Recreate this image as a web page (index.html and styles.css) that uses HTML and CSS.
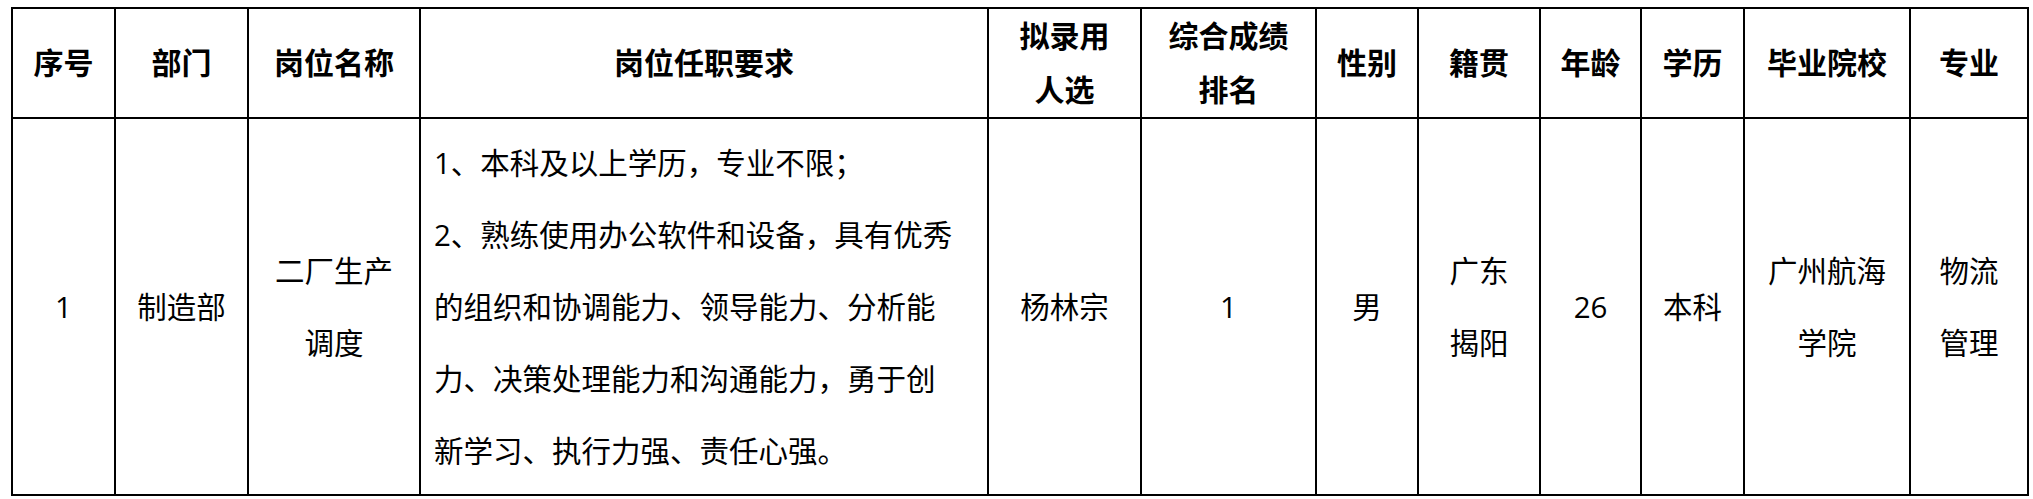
FILE: index.html
```html
<!DOCTYPE html>
<html lang="zh-CN">
<head>
<meta charset="utf-8">
<title>拟录用人选公示</title>
<link rel="stylesheet" href="styles.css">
</head>
<body>
<table class="roster">
  <colgroup>
    <col class="w-no">
    <col class="w-dept">
    <col class="w-post">
    <col class="w-req">
    <col class="w-name">
    <col class="w-rank">
    <col class="w-sex">
    <col class="w-origin">
    <col class="w-age">
    <col class="w-edu">
    <col class="w-school">
    <col class="w-major">
  </colgroup>
  <thead>
    <tr class="head-row">
      <th>序号</th>
      <th>部门</th>
      <th>岗位名称</th>
      <th>岗位任职要求</th>
      <th>拟录用<br>人选</th>
      <th>综合成绩<br>排名</th>
      <th>性别</th>
      <th>籍贯</th>
      <th>年龄</th>
      <th>学历</th>
      <th>毕业院校</th>
      <th>专业</th>
    </tr>
  </thead>
  <tbody>
    <tr class="body-row">
      <td>1</td>
      <td>制造部</td>
      <td>二厂生产<br>调度</td>
      <td class="req">
        <p>1、本科及以上学历，专业不限；</p>
        <p>2、熟练使用办公软件和设备，具有优秀的组织和协调能力、领导能力、分析能力、决策处理能力和沟通能力，勇于创新学习、执行力强、责任心强。</p>
      </td>
      <td>杨林宗</td>
      <td>1</td>
      <td>男</td>
      <td>广东<br>揭阳</td>
      <td>26</td>
      <td>本科</td>
      <td>广州航海<br>学院</td>
      <td>物流<br>管理</td>
    </tr>
  </tbody>
</table>
</body>
</html>
```

FILE: styles.css
```css
html, body {
  margin: 0;
  padding: 0;
  background: #ffffff;
}

body {
  font-family: "Open Sans", "Noto Sans CJK SC", sans-serif;
  color: #000000;
}

.roster {
  margin: 7px 0 0 11px;
  width: 2018px;
  table-layout: fixed;
  border-collapse: separate;
  border-spacing: 0;
  border-left: 2px solid #000;
  border-top: 2px solid #000;
}

.w-no { width: 103px; }
.w-dept { width: 133px; }
.w-post { width: 172px; }
.w-req { width: 568px; }
.w-name { width: 153px; }
.w-rank { width: 175px; }
.w-sex { width: 102px; }
.w-origin { width: 122px; }
.w-age { width: 101px; }
.w-edu { width: 103px; }
.w-school { width: 166px; }
.w-major { width: 118px; }

.roster th,
.roster td {
  border-right: 2px solid #000;
  border-bottom: 2px solid #000;
  padding: 0;
  text-align: center;
  vertical-align: middle;
  white-space: nowrap;
}

.roster th {
  font-size: 30px;
  font-weight: 700;
  line-height: 54px;
}

.roster td {
  font-size: 29.5px;
  font-weight: 400;
  line-height: 72px;
}

.head-row {
  height: 109px;
}

.body-row {
  height: 377px;
}

.roster td.req {
  text-align: left;
  white-space: normal;
  padding: 0 28px 0 13px;
}

.req p {
  margin: 0;
}
```
